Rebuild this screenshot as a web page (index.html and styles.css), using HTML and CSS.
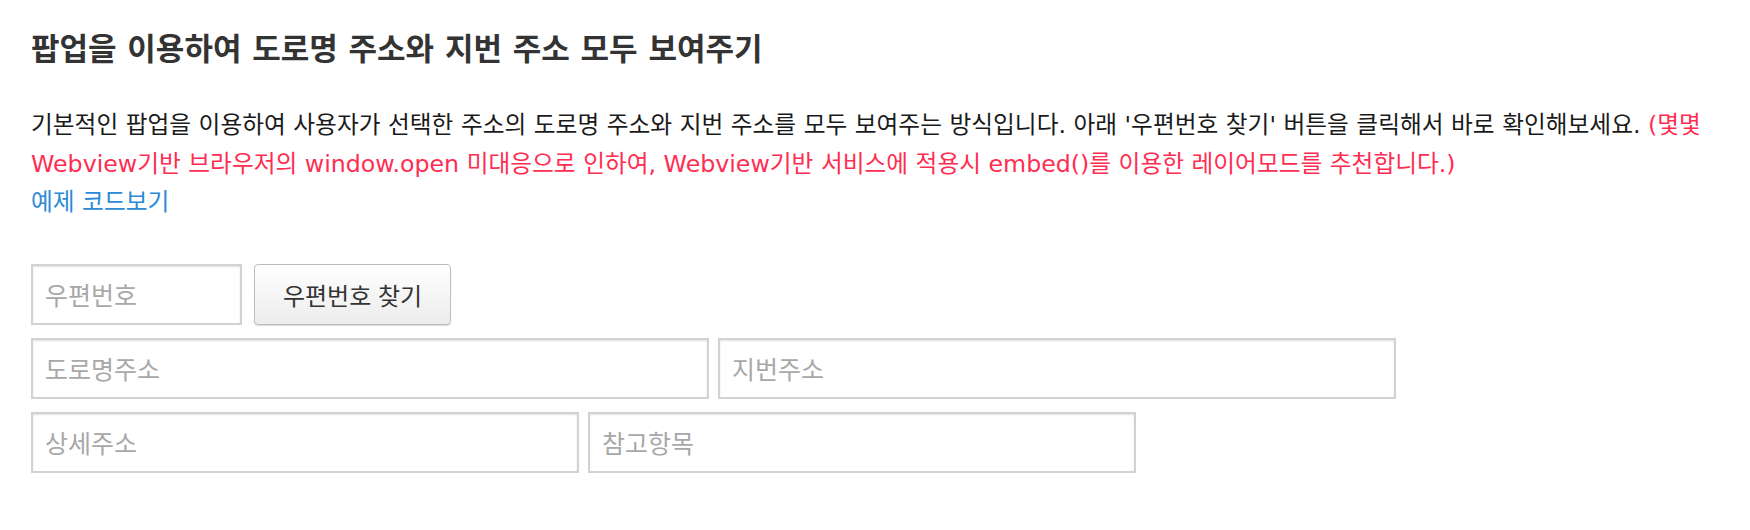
FILE: index.html
```html
<!DOCTYPE html>
<html lang="ko">
<head>
  <meta charset="UTF-8" />
  <meta name="viewport" content="width=device-width, initial-scale=1.0"/>
  <title>도로명 주소와 지번 주소 모두 보여주기</title>
  <link rel="stylesheet" href="styles.css">
</head>
<body>
  <div class="wrap">
    <h2 class="title">팝업을 이용하여 도로명 주소와 지번 주소 모두 보여주기</h2>

    <p class="desc">
      기본적인 팝업을 이용하여 사용자가 선택한 주소의 도로명 주소와 지번 주소를 모두 보여주는 방식입니다. 아래 '우편번호 찾기' 버튼을 클릭해서 바로 확인해보세요.
      <span class="warn">(몇몇 Webview기반 브라우저의 window.open 미대응으로 인하여, Webview기반 서비스에 적용시 embed()를 이용한 레이어모드를 추천합니다.)</span><br>
      <a href="#" class="code-link">예제 코드보기</a>
    </p>

    <!-- 주소 입력 폼 -->
    <form class="addr-form">
      <div class="form-row">
        <input type="text" id="postcode" class="field field-post" placeholder="우편번호">
        <button type="button" class="btn-find">우편번호 찾기</button>
      </div>
      <div class="form-row">
        <input type="text" id="roadAddress" class="field field-wide" placeholder="도로명주소">
        <input type="text" id="jibunAddress" class="field field-wide" placeholder="지번주소">
      </div>
      <div class="form-row">
        <input type="text" id="detailAddress" class="field field-mid" placeholder="상세주소">
        <input type="text" id="extraAddress" class="field field-mid" placeholder="참고항목">
      </div>
    </form>
  </div>
</body>
</html>
```

FILE: styles.css
```css
* {
  box-sizing: border-box;
}

body {
  margin: 0;
  background: #fff;
  font-family: "DejaVu Sans", "Noto Sans CJK KR", sans-serif;
  color: #1a1a1a;
}

.wrap {
  padding: 0 31px;
  word-break: keep-all;
}

.title {
  margin: 27px 0 35px;
  font-size: 31px;
  line-height: 44px;
  font-weight: bold;
  color: #333;
}

.desc {
  margin: 0;
  font-size: 23.7px;
  line-height: 38.5px;
}

.warn {
  color: #ff2d52;
}

.code-link {
  color: #2c89d6;
  text-decoration: none;
}

.addr-form {
  margin-top: 42px;
}

.form-row {
  display: flex;
  align-items: center;
  gap: 9px;
}

.form-row + .form-row {
  margin-top: 13px;
}

.field {
  height: 61px;
  padding: 0 12px;
  border: 2px solid #d2d2d2;
  box-shadow: inset 0 1px 2px rgba(0,0,0,0.12);
  background: #fff;
  font-family: "Noto Sans CJK KR", sans-serif;
  font-size: 25px;
  color: #333;
}

.field::placeholder {
  color: #a8a8a8;
}

.field-post {
  width: 211px;
}

.field-wide {
  width: 678px;
}

.field-mid {
  width: 548px;
}

.btn-find {
  width: 197px;
  height: 61px;
  margin-left: 3px;
  border: 1px solid #bdbdbd;
  border-radius: 4px;
  background: linear-gradient(#ffffff, #ececec);
  box-shadow: 0 1px 1px rgba(0,0,0,0.15);
  font-family: "Noto Sans CJK KR", sans-serif;
  font-size: 24px;
  color: #333;
  cursor: pointer;
}
```
